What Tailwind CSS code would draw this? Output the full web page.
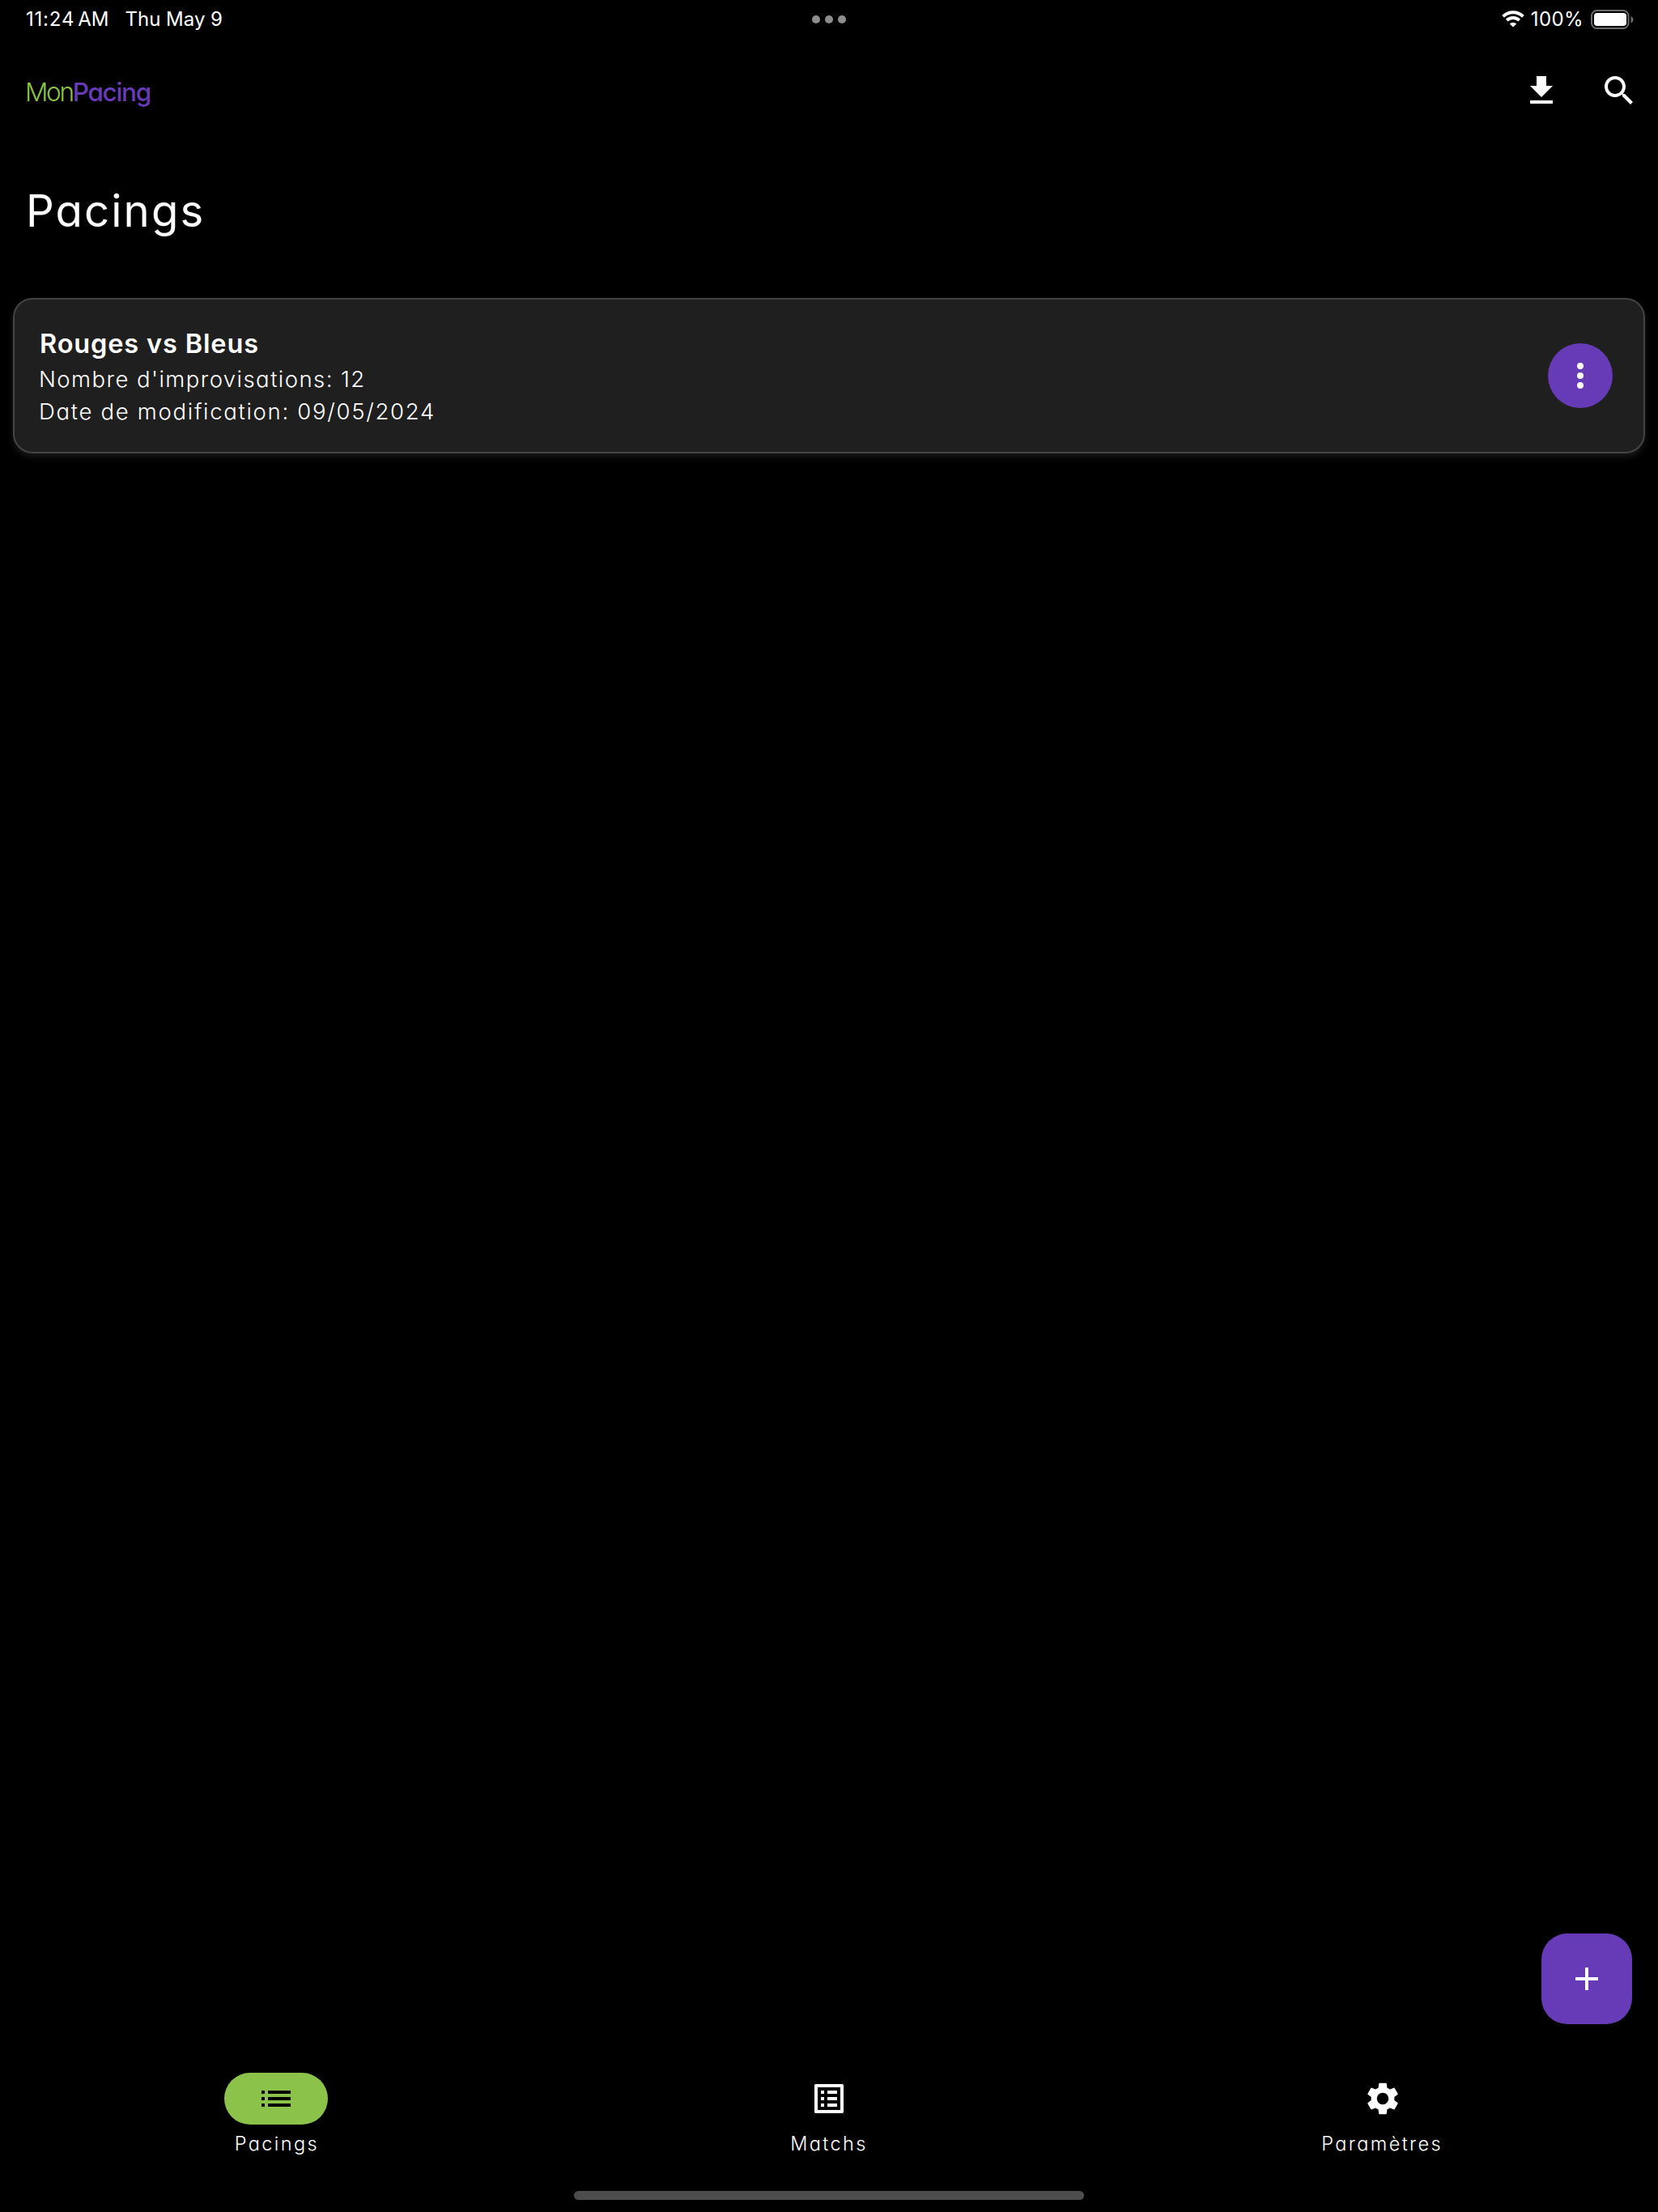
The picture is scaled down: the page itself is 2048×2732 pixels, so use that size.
<!DOCTYPE html>
<html lang="fr">
<head>
<meta charset="utf-8">
<title>MonPacing</title>
<script src="https://cdn.jsdelivr.net/npm/@tailwindcss/browser@4"></script>
</head>
<body class="bg-black">
<div class="relative flex h-[2732px] w-[2048px] flex-col overflow-hidden bg-black font-['Inter',sans-serif] whitespace-nowrap text-white [font-feature-settings:'cv11']">

  <!-- Status bar -->
  <div class="grid h-[47px] grid-cols-3 items-center pr-[30px] pl-8 text-[24px] leading-[46px] [font-feature-settings:normal]">
    <div class="flex gap-[20px] pt-px">
      <div class="flex gap-[4px]"><span class="tracking-[0.8px]">11:24</span><span>AM</span></div>
      <span>Thu May 9</span>
    </div>
    <div class="flex justify-center gap-1.5 pt-px pr-0.5">
      <i class="size-2.5 rounded-full bg-[#8e8e8e]"></i><i class="size-2.5 rounded-full bg-[#8e8e8e]"></i><i class="size-2.5 rounded-full bg-[#8e8e8e]"></i>
    </div>
    <div class="flex items-center justify-end">
      <svg class="mr-2 h-[21px] w-7" viewBox="0 0 28 21" fill="none" stroke="#fff" stroke-width="3.9">
        <path d="M1.6 7.4a17.6 17.6 0 0 1 24.8 0"/><path d="M6.3 12.1a11 11 0 0 1 15.4 0"/><path d="M14 20.6l-4.2-4.2a6 6 0 0 1 8.4 0z" fill="#fff" stroke="none"/>
      </svg>
      <span class="mr-[9px] pt-px tracking-[0.4px]">100%</span>
      <svg class="mt-px h-6 w-[53px]" viewBox="0 0 53 24">
        <rect x="1" y="1" width="45.5" height="22" rx="6.5" fill="none" stroke="#6b6b6b" stroke-width="2"/>
        <rect x="4" y="4" width="40" height="16" rx="3.8" fill="#fff"/>
        <path d="M49.5 8v8.4c1.8-.8 3-2.3 3-4.2s-1.2-3.4-3-4.2z" fill="#6b6b6b"/>
      </svg>
    </div>
  </div>

  <!-- App bar -->
  <header class="flex h-[130px] items-center justify-between pr-6 pl-[31px]">
    <div class="pt-[3px] text-[31.5px] leading-[40px]"><span class="font-light tracking-[-2.3px] text-[#8bc34a]">Mon</span><span class="font-medium tracking-[-1.3px] text-[#673ab7]">Pacing</span></div>
    <div class="flex gap-12">
      <svg class="size-12" viewBox="0 0 24 24" fill="#fff"><path d="M19 9h-4V3H9v6H5l7 7 7-7zM5 18v2h14v-2H5z"/></svg>
      <svg class="size-12" viewBox="0 0 24 24" fill="#fff"><path d="M15.5 14h-.79l-.28-.27C15.41 12.59 16 11.11 16 9.5 16 5.91 13.09 3 9.5 3S3 5.91 3 9.5 5.91 16 9.5 16c1.61 0 3.09-.59 4.23-1.57l.27.28v.79l5 4.99L20.49 19l-4.99-5zm-6 0C7.01 14 5 11.99 5 9.5S7.01 5 9.5 5 14 7.01 14 9.5 11.99 14 9.5 14z"/></svg>
    </div>
  </header>

  <h1 class="h-[167px] pl-8 text-[54.5px] leading-[167px] font-normal"><span class="tracking-[2.1px]">Pacings</span></h1>

  <!-- Pacing list -->
  <main class="mt-6 flex-1 px-4">
    <article class="flex h-48 items-center justify-between rounded-3xl border-2 border-[#444] bg-[#1f1f1f] pr-[38px] pl-[29px] shadow-[0_4px_8px_rgba(255,255,255,0.1)]">
      <div class="pt-0.5">
        <h2 class="pl-0.5 text-[32.5px] leading-[46px] font-semibold"><span class="tracking-[0.85px]">Rouges vs Bleus</span></h2>
        <p class="pl-px text-[27.5px] leading-[40px] font-light"><span class="tracking-[1.45px]">Nombre d'improvisations: 12</span></p>
        <p class="pl-px text-[27.5px] leading-[40px] font-light"><span class="tracking-[1.7px]">Date de modification: 09/05/2024</span></p>
      </div>
      <button class="flex size-20 items-center justify-center rounded-full bg-[#673ab7]">
        <svg class="size-12" viewBox="0 0 24 24" fill="#fff"><circle cx="12" cy="6" r="2"/><circle cx="12" cy="12" r="2"/><circle cx="12" cy="18" r="2"/></svg>
      </button>
    </article>
  </main>

  <!-- Floating add button -->
  <button class="absolute right-8 bottom-[232px] flex size-28 items-center justify-center rounded-[32px] bg-[#673ab7]">
    <svg class="size-12" viewBox="0 0 24 24" fill="#fff"><path d="M19 13h-6v6h-2v-6H5v-2h6V5h2v6h6v2z"/></svg>
  </button>

  <!-- Bottom navigation -->
  <nav class="grid h-[146px] grid-cols-3 text-[23.5px] leading-[31px] font-light tracking-[2.4px]">
    <div class="flex flex-col items-center gap-2">
      <div class="flex h-16 w-32 items-center justify-center rounded-full bg-[#8bc34a]">
        <svg class="size-12" viewBox="0 0 24 24" fill="#000"><path d="M3 13h2v-2H3v2zm0 4h2v-2H3v2zm0-8h2V7H3v2zm4 4h14v-2H7v2zm0 4h14v-2H7v2zM7 7v2h14V7H7z"/></svg>
      </div>
      <span class="pl-px">Pacings</span>
    </div>
    <div class="flex flex-col items-center gap-2">
      <div class="flex h-16 w-32 items-center justify-center">
        <svg class="size-12" viewBox="0 0 24 24" fill="#fff"><path d="M19 5v14H5V5h14m1.1-2H3.9c-.5 0-.9.4-.9.9v16.2c0 .4.4.9.9.9h16.2c.4 0 .9-.5.9-.9V3.9c0-.5-.5-.9-.9-.9zM11 7h6v2h-6V7zm0 4h6v2h-6v-2zm0 4h6v2h-6zM7 7h2v2H7zm0 4h2v2H7zm0 4h2v2H7z"/></svg>
      </div>
      <span>Matchs</span>
    </div>
    <div class="flex flex-col items-center gap-2">
      <div class="flex h-16 w-32 items-center justify-center pl-0.5">
        <svg class="size-12" viewBox="0 0 24 24" fill="#fff"><path d="M19.14 12.94c.04-.3.06-.61.06-.94 0-.32-.02-.64-.07-.94l2.03-1.58c.18-.14.23-.41.12-.61l-1.92-3.32c-.12-.22-.37-.29-.59-.22l-2.39.96c-.5-.38-1.03-.7-1.62-.94l-.36-2.54c-.04-.24-.24-.41-.48-.41h-3.84c-.24 0-.43.17-.47.41l-.36 2.54c-.59.24-1.13.57-1.62.94l-2.39-.96c-.22-.08-.47 0-.59.22L2.74 8.87c-.12.21-.08.47.12.61l2.03 1.58c-.05.3-.09.63-.09.94s.02.64.07.94l-2.03 1.58c-.18.14-.23.41-.12.61l1.92 3.32c.12.22.37.29.59.22l2.39-.96c.5.38 1.03.7 1.62.94l.36 2.54c.05.24.24.41.48.41h3.84c.24 0 .44-.17.47-.41l.36-2.54c.59-.24 1.13-.56 1.62-.94l2.39.96c.22.08.47 0 .59-.22l1.92-3.32c.12-.22.07-.47-.12-.61l-2.01-1.58zM12 15.6c-1.98 0-3.6-1.62-3.6-3.6s1.62-3.6 3.6-3.6 3.6 1.62 3.6 3.6-1.62 3.6-3.6 3.6z"/></svg>
      </div>
      <span class="pl-px">Paramètres</span>
    </div>
  </nav>

  <!-- Home indicator -->
  <div class="mx-auto mb-[15px] h-[11px] w-[630px] rounded-full bg-[#4d4d4d]"></div>
</div>
</body>
</html>
